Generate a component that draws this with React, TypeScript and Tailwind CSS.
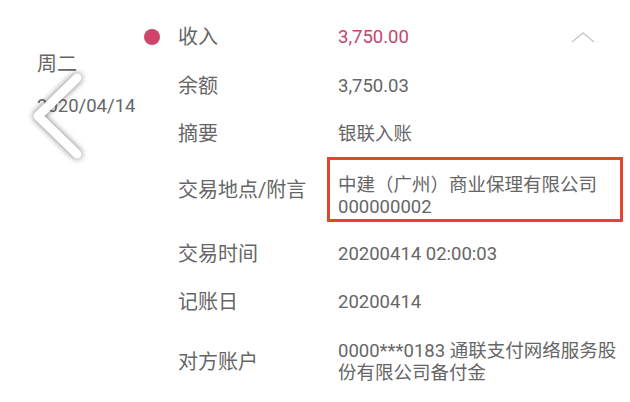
import React from "react";

const font = { fontFamily: 'Roboto, "Noto Sans CJK SC", sans-serif' };

function Row({
  label,
  children,
  dot = false,
  className = "",
}: {
  label: string;
  children: React.ReactNode;
  dot?: boolean;
  className?: string;
}) {
  return (
    <div className={`flex items-center ${className}`}>
      <div className="flex w-[34px] shrink-0 items-center">
        {dot && <span className="block h-4 w-4 rounded-full bg-[#cf4468]" />}
      </div>
      <div className="w-[160px] shrink-0 text-[20px] text-[#666]">{label}</div>
      <div className="flex-1 text-[18.5px] leading-[22px] text-[#666]">{children}</div>
    </div>
  );
}

export default function App() {
  return (
    <div className="flex h-[402px] w-[630px] overflow-hidden bg-white" style={font}>
      <div className="relative w-[144px] shrink-0 pl-[37px] pt-[50px] text-[#666]">
        <p className="text-[20px] leading-[28px]">周二</p>
        <p className="mt-4 text-[18.5px] leading-[24px]">2020/04/14</p>
        <svg
          className="absolute left-[26px] top-[70px]"
          width="66"
          height="94"
          viewBox="0 0 66 94"
          style={{ filter: "drop-shadow(0 0 3px rgba(0,0,0,0.55))" }}
        >
          <polyline
            points="51,8 12,46 51,84"
            fill="none"
            stroke="#fff"
            strokeWidth="9"
            strokeLinecap="round"
            strokeLinejoin="round"
          />
        </svg>
      </div>

      <div className="flex flex-1 flex-col pr-[7px] pt-[12px]">
        <Row label="收入" dot className="h-[49px]">
          <div className="flex items-center justify-between">
            <span className="text-[#c4456b]">3,750.00</span>
            <svg className="mr-[27px]" width="26" height="12" viewBox="0 0 26 12">
              <polyline points="2,11 13,2 24,11" fill="none" stroke="#c8c8c8" strokeWidth="1.5" />
            </svg>
          </div>
        </Row>
        <Row label="余额" className="h-[49px]">
          3,750.03
        </Row>
        <Row label="摘要" className="h-12">
          银联入账
        </Row>
        <Row label="交易地点/附言" className="-mt-px">
          <div className="-ml-[11px] h-[65px] border-[3px] border-[#e8432b] pl-2 pt-[14px]">
            <p>中建（广州）商业保理有限公司</p>
            <p>000000002</p>
          </div>
        </Row>
        <Row label="交易时间" className="mt-2 h-12">
          20200414 02:00:03
        </Row>
        <Row label="记账日" className="h-12">
          20200414
        </Row>
        <Row label="对方账户" className="mt-[14px]">
          <p className="whitespace-nowrap">0000***0183 通联支付网络服务股</p>
          <p className="whitespace-nowrap">份有限公司备付金</p>
        </Row>
      </div>
    </div>
  );
}
